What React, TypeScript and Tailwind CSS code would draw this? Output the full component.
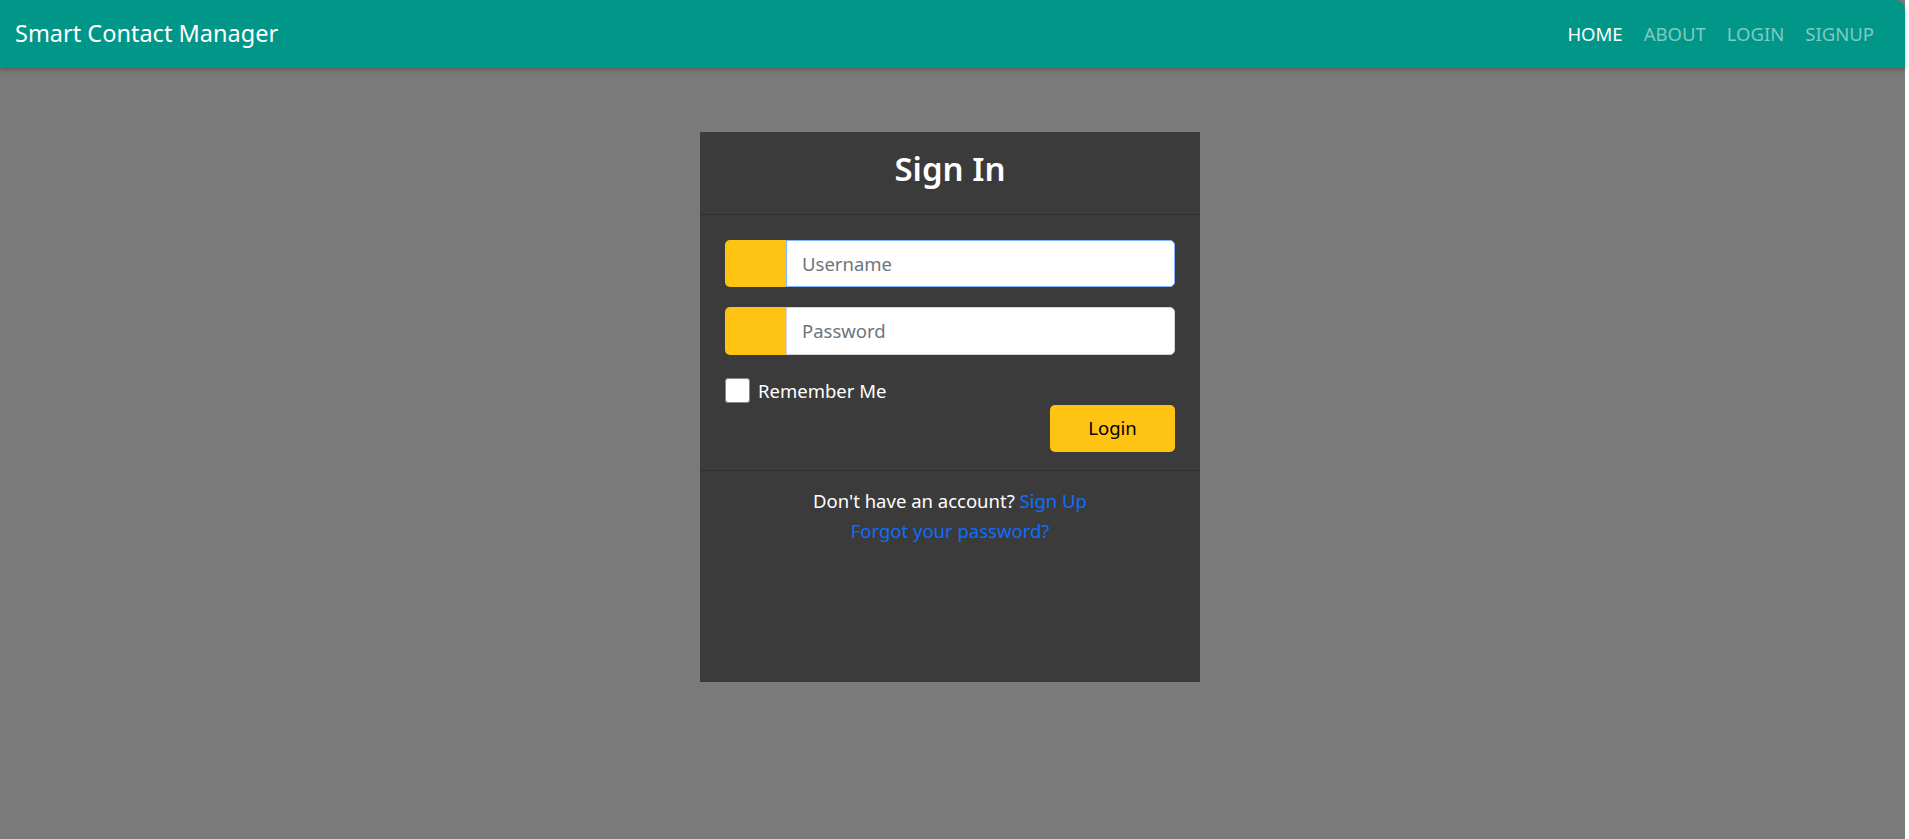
import React from "react";

export default function App() {
  const font = { fontFamily: '"Noto Sans", "Open Sans", sans-serif' };
  return (
    <div className="min-h-[839px] w-full bg-white" style={font}>
      <div className="mr-[4px] min-h-[839px] bg-[#7a7a7a]">
        <nav className="flex h-[68px] items-center justify-between rounded-tr-[10px] bg-[#009688] pl-[15px] pr-[31px] shadow-[0_2px_4px_rgba(0,0,0,0.25)]">
          <span className="text-[23.5px] text-white">Smart Contact Manager</span>
          <div className="flex items-center gap-[21px] text-[18.5px]">
            <a className="text-white">HOME</a>
            <a className="text-white/50">ABOUT</a>
            <a className="text-white/50">LOGIN</a>
            <a className="text-white/50">SIGNUP</a>
          </div>
        </nav>
        <div className="flex justify-center pr-[5px] pt-[64px]">
          <div className="flex h-[550px] w-[500px] flex-col bg-[#3b3b3b]">
            <div className="flex h-[83px] items-center justify-center border-b border-black/20 pb-[8px]">
              <h1 className="text-[33px] font-semibold text-white">Sign In</h1>
            </div>
            <div className="flex flex-col px-[25px] pb-[18px] pt-[25px]">
              <div className="flex h-[47px]">
                <div className="w-[61px] rounded-l-[5px] bg-[#ffc413]" />
                <input
                  className="min-w-0 flex-1 rounded-r-[5px] border border-[#86b7fe] bg-white px-[15px] text-[18.5px] text-[#212529] outline-none placeholder:text-[#6c757d]"
                  placeholder="Username"
                  style={font}
                />
              </div>
              <div className="mt-[20px] flex h-[48px]">
                <div className="w-[61px] rounded-l-[5px] bg-[#ffc413]" />
                <input
                  className="min-w-0 flex-1 rounded-r-[5px] border border-[#ced4da] bg-white px-[15px] text-[18.5px] text-[#212529] outline-none placeholder:text-[#6c757d]"
                  placeholder="Password"
                  type="password"
                  style={font}
                />
              </div>
              <label className="mt-[22px] flex items-center gap-[8px] text-[18.5px] text-white">
                <span className="h-[25px] w-[25px] rounded-[3px] border border-[#888] bg-white" />
                Remember Me
              </label>
              <div className="flex justify-end">
                <button className="h-[47px] w-[125px] rounded-[5px] bg-[#ffc413] text-[18.5px] text-black" style={font}>
                  Login
                </button>
              </div>
            </div>
            <div className="flex flex-1 flex-col items-center border-t border-black/20 pt-[15px] text-[18.5px] leading-[30px]">
              <p className="text-white">
                Don't have an account? <a className="text-[#0d6efd]">Sign Up</a>
              </p>
              <a className="text-[#0d6efd]">Forgot your password?</a>
            </div>
          </div>
        </div>
      </div>
    </div>
  );
}
